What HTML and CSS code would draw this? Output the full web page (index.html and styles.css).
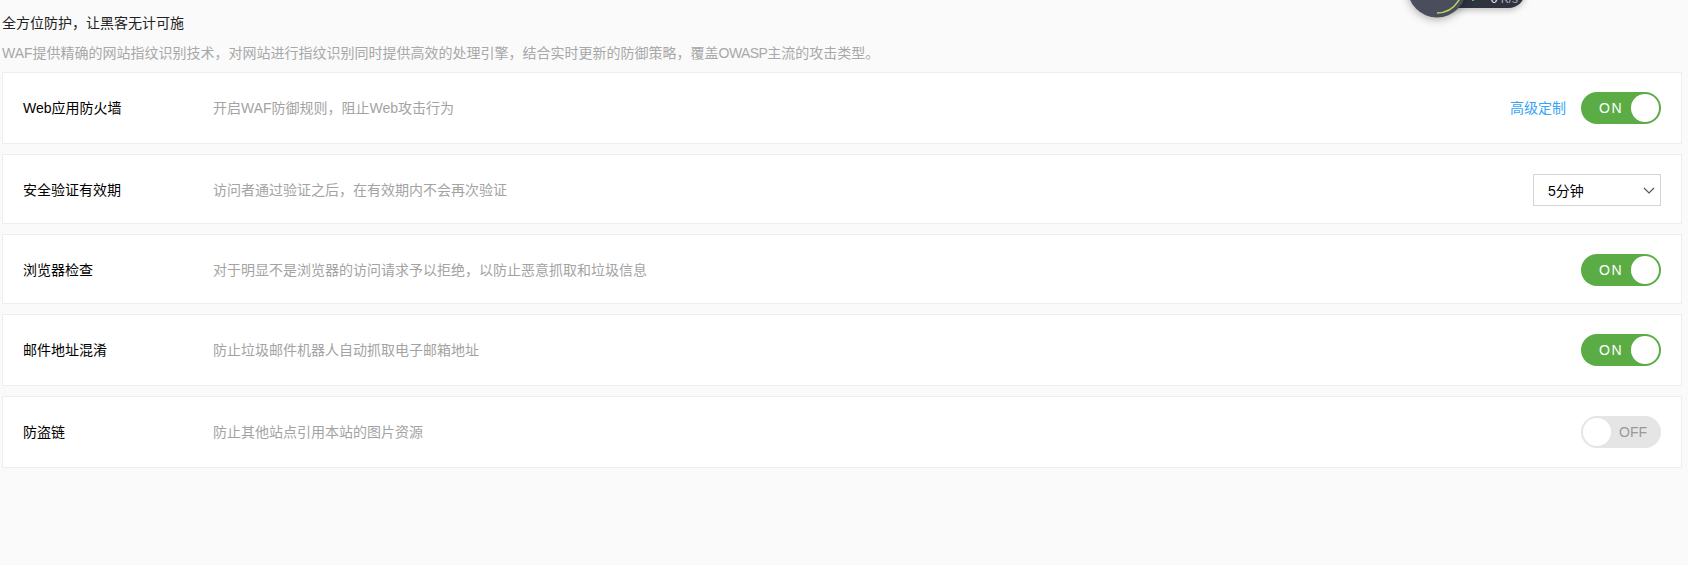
FILE: index.html
```html
<!DOCTYPE html>
<html lang="zh-CN">
<head>
<meta charset="utf-8">
<title>WAF</title>
<link rel="stylesheet" href="styles.css">
</head>
<body>
<div class="speed">
  <div class="speed-pill"><span class="speed-tick"></span><span class="speed-text"><b class="speed-num">0</b> K/s</span></div>
  <svg class="speed-dial" width="60" height="60" viewBox="0 0 60 60"><circle cx="30" cy="30" r="29.5" fill="#4a4e5c"/><path d="M52.9 20A25 25 0 0 1 30 55" fill="none" stroke="#b5dc5f" stroke-width="1.5"/></svg>
</div>
<main class="page">
  <h1 class="title">全方位防护，让黑客无计可施</h1>
  <p class="lead">WAF提供精确的网站指纹识别技术，对网站进行指纹识别同时提供高效的处理引擎，结合实时更新的防御策略，覆盖<span class="tight">OWASP</span>主流的攻击类型。</p>
  <section class="row row-72">
    <div class="name">Web应用防火墙</div>
    <div class="desc">开启WAF防御规则，阻止Web攻击行为</div>
    <a class="link">高级定制</a>
    <div class="toggle on"><span class="toggle-label">ON</span><span class="knob"></span></div>
  </section>
  <section class="row row-70">
    <div class="name">安全验证有效期</div>
    <div class="desc">访问者通过验证之后，在有效期内不会再次验证</div>
    <div class="select"><span>5分钟</span><svg width="12" height="7" viewBox="0 0 12 7"><path d="M1 1l5 5 5-5" fill="none" stroke="#555" stroke-width="1.2"/></svg></div>
  </section>
  <section class="row row-70">
    <div class="name">浏览器检查</div>
    <div class="desc">对于明显不是浏览器的访问请求予以拒绝，以防止恶意抓取和垃圾信息</div>
    <div class="toggle on"><span class="toggle-label">ON</span><span class="knob"></span></div>
  </section>
  <section class="row row-72">
    <div class="name">邮件地址混淆</div>
    <div class="desc">防止垃圾邮件机器人自动抓取电子邮箱地址</div>
    <div class="toggle on"><span class="toggle-label">ON</span><span class="knob"></span></div>
  </section>
  <section class="row row-72">
    <div class="name">防盗链</div>
    <div class="desc">防止其他站点引用本站的图片资源</div>
    <div class="toggle off"><span class="knob"></span><span class="toggle-label">OFF</span></div>
  </section>
</main>
</body>
</html>
```
FILE: styles.css
```css
* { box-sizing: border-box; }
html, body { margin: 0; height: 100%; }
body {
  background: #fafafa;
  font-family: "Liberation Sans", "Noto Sans CJK SC", sans-serif;
  font-size: 14px;
  color: #000;
  overflow: hidden;
  position: relative;
}
.page { padding: 14px 6px 0 2px; }
.title { margin: 0; font-size: 14px; font-weight: 400; line-height: 18px; color: #222; }
.lead { margin: 11px 0 0; font-size: 14px; line-height: 20px; color: #a8a8a8; }
.tight { letter-spacing: -.6px; }
.row {
  display: flex;
  align-items: center;
  background: #fff;
  border: 1px solid #eee;
  padding: 0 20px;
  margin-bottom: 10px;
}
.lead + .row { margin-top: 9px; }
.row-72 { height: 72px; }
.row-70 { height: 70px; }
.row-72 .name, .row-72 .desc, .row-72 .link { margin-bottom: 2px; }
.row-70 .toggle, .row-70 .select { margin-top: 2px; }
.name { width: 190px; flex: none; color: #000; }
.desc { flex: 1; color: #a3a3a3; }
.link { color: #36a3f7; margin-right: 15px; }
.toggle {
  width: 80px;
  height: 32px;
  border-radius: 16px;
  display: flex;
  align-items: center;
  flex: none;
  font-size: 14px;
}
.toggle.on { background: #5bac45; color: #fff; justify-content: flex-end; padding: 1px; }
.toggle.off { background: #e5e5e5; color: #999; padding: 1px; }
.toggle-label { letter-spacing: 1.5px; }
.toggle.on .toggle-label { margin-right: 7px; }
.toggle.off .toggle-label { margin-left: 7px; letter-spacing: 0; }
.knob { width: 28px; height: 28px; border-radius: 50%; background: #fff; flex: none; margin: 0 1px; }
.select {
  width: 128px;
  height: 32px;
  border: 1px solid #d5d5d5;
  display: flex;
  align-items: center;
  justify-content: space-between;
  padding: 0 5px 0 14px;
  flex: none;
  background: #fff;
}
.speed { position: absolute; left: 1407px; top: -42px; width: 120px; height: 60px; }
.speed-pill {
  position: absolute;
  left: 30px;
  top: 17px;
  width: 88px;
  height: 33px;
  border-radius: 0 17px 17px 0;
  background: #2f3340;
  box-shadow: 0 2px 6px rgba(0,0,0,.25);
  color: #a9acb5;
  font-size: 12px;
  text-align: right;
  padding: 17px 7px 0 0;
  line-height: 14px;
}
.speed-num { color: #fff; font-weight: 400; }
.speed-tick { position: absolute; left: 35px; top: 24px; width: 2px; height: 2px; background: #4fc15a; }
.speed-dial { position: absolute; left: 0; top: 0; filter: drop-shadow(0 2px 4px rgba(0,0,0,.3)); }
```
